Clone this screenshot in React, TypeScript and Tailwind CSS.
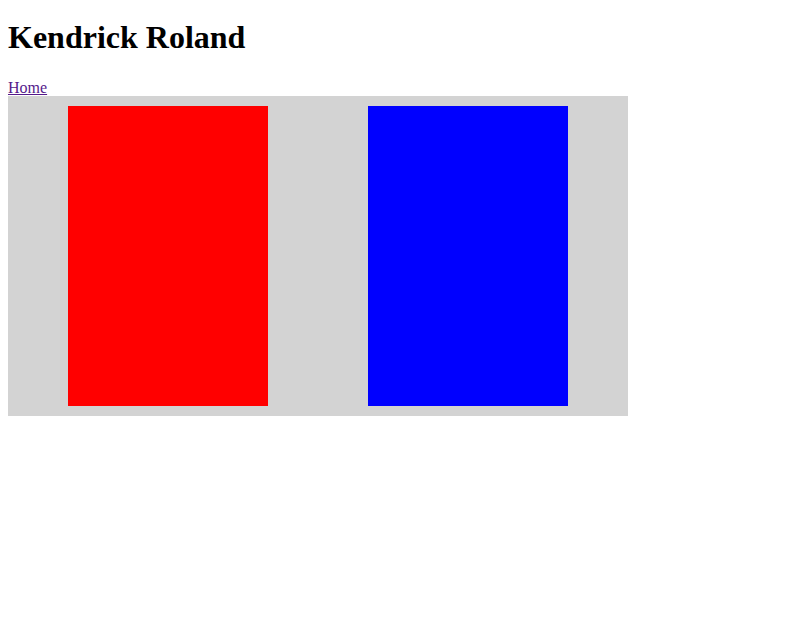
const App = () => {
  return (
    <div className="mx-2 font-['Liberation_Serif',serif] text-black">
      <h1 className="mt-[13px] mb-[15px] text-[32px] font-bold leading-normal">
        Kendrick Roland
      </h1>

      {/* Nav */}
      <nav className="h-[20px] text-base leading-normal">
        <a href="#" className="text-[#551a8b] underline">
          Home
        </a>
      </nav>

      {/* Panels */}
      <div className="flex w-[620px] h-[320px] bg-[#d3d3d3] px-[10px] py-[10px]">
        <div className="mx-[50px] w-[200px] h-[300px] bg-[#ff0000]" />
        <div className="mx-[50px] w-[200px] h-[300px] bg-[#0000ff]" />
      </div>
    </div>
  );
};

export default App;
